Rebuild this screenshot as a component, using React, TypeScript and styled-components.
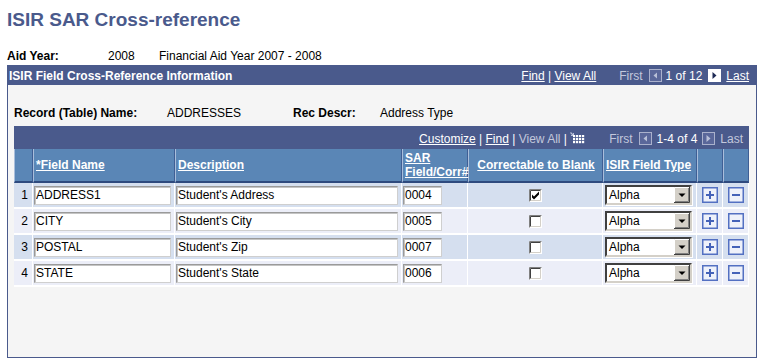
import React from "react";
import styled, { createGlobalStyle } from "styled-components";

const GlobalStyle = createGlobalStyle`
  body {
    margin: 0;
    background: #ffffff;
    font-family: Arial, "Liberation Sans", sans-serif;
    font-size: 12px;
    color: #000000;
  }
`;

const Page = styled.div`
  padding: 9px 0 0 7px;
`;

const Title = styled.h1`
  margin: 0;
  height: 22px;
  font-size: 19px;
  line-height: 22px;
  font-weight: bold;
  color: #4a5a8c;
`;

const InfoRow = styled.div`
  display: flex;
  height: 16px;
  line-height: 16px;
  margin-top: ${(p: { $top: number }) => p.$top}px;
`;

const Label = styled.span<{ $w: number }>`
  width: ${(p) => p.$w}px;
  font-weight: bold;
`;

const Value = styled.span<{ $w?: number }>`
  width: ${(p) => (p.$w ? `${p.$w}px` : "auto")};
`;

const Panel = styled.div`
  width: 748px;
  margin-top: 1px;
  border: 1px solid #4a5a8c;
  background: #f5f5f5;
`;

const PanelBar = styled.div`
  height: 19px;
  background: #4a5a8c;
  color: #ffffff;
  display: flex;
  align-items: center;
  justify-content: space-between;
  padding: 0 7px 0 1px;
`;

const BarTitle = styled.span`
  font-weight: bold;
`;

const Nav = styled.div`
  display: flex;
  align-items: center;
  color: #ffffff;
  white-space: pre;
`;

const NavLink = styled.span<{ $off?: boolean }>`
  color: ${(p) => (p.$off ? "#c3c8dc" : "#ffffff")};
  text-decoration: ${(p) => (p.$off ? "none" : "underline")};
`;

const Gap = styled.span<{ $w: number }>`
  display: inline-block;
  width: ${(p) => p.$w}px;
`;

const PanelBody = styled.div`
  padding: 0 7px 70px 6px;
`;

const GridNav = styled.div`
  width: 729px;
  height: 21px;
  margin-top: 5px;
  background: #4a5a8c;
  display: flex;
  justify-content: flex-end;
  align-items: center;
  padding: 2px 6px 0 0;
  box-sizing: content-box;
`;

const Grid = styled.table`
  width: 735px;
  border-collapse: separate;
  border-spacing: 0;
  table-layout: fixed;
`;

const HeadRow = styled.tr`
  height: 34px;
`;

const Th = styled.th<{ $center?: boolean }>`
  background: #5a86b6;
  color: #ffffff;
  font-weight: bold;
  font-size: 12px;
  line-height: 14px;
  text-align: ${(p) => (p.$center ? "center" : "left")};
  vertical-align: middle;
  padding: 0 1px 0 2px;
  border-left: 1px solid #a9bedb;
  border-right: 1px solid #3f5f95;
  border-bottom: 2px solid #2e4a7e;
  white-space: nowrap;

  & > span {
    text-decoration: underline;
  }
`;

const Row = styled.tr<{ $odd: boolean }>`
  height: 26px;
  background: ${(p) => (p.$odd ? "#d5dfef" : "#eceef8")};
`;

const Td = styled.td<{ $align?: string }>`
  padding: 0 1px;
  text-align: ${(p) => p.$align || "left"};
  vertical-align: middle;
  border-right: 1px solid #ffffff;
  border-bottom: 2px solid #ffffff;
`;

const RowNum = styled(Td)`
  padding-right: 4px;
`;

const TextBox = styled.input<{ $w: number }>`
  width: ${(p) => p.$w}px;
  height: 19px;
  box-sizing: border-box;
  margin: 0;
  padding: 0 1px;
  font-family: Arial, "Liberation Sans", sans-serif;
  font-size: 12px;
  color: #000000;
  background: #ffffff;
  border: 1px solid;
  border-color: #9a9a9a #cfcfcf #cfcfcf #9a9a9a;
  box-shadow: inset 1px 1px 0 #c4c4c4;
  outline: none;
  display: block;
`;

const Select = styled.div`
  width: 87px;
  height: 20px;
  box-sizing: border-box;
  margin-left: 1px;
  display: flex;
  align-items: center;
  justify-content: space-between;
  background: #ffffff;
  border: 2px solid;
  border-color: #404040 #d4d0c8 #d4d0c8 #404040;
  box-shadow: 1px 1px 0 #ffffff;
  padding-left: 2px;
`;

const Center = styled.div`
  display: flex;
  justify-content: center;
  align-items: center;
`;

const PrevIcon = ({ on }: { on?: boolean }) => (
  <svg width="13" height="13" viewBox="0 0 13 13">
    <rect x="0.5" y="0.5" width="12" height="12" fill={on ? "#ffffff" : "#5a679a"} stroke={on ? "#ffffff" : "#aab1cc"} />
    <path d="M8 3.5 L4.5 6.5 L8 9.5 Z" fill={on ? "#1e2a55" : "#b9c0d8"} />
  </svg>
);

const NextIcon = ({ on }: { on?: boolean }) => (
  <svg width="13" height="13" viewBox="0 0 13 13">
    <rect x="0.5" y="0.5" width="12" height="12" fill={on ? "#ffffff" : "#5a679a"} stroke={on ? "#ffffff" : "#aab1cc"} />
    <path d="M4.5 3 L8.5 6.5 L4.5 10 Z" fill={on ? "#1e2a55" : "#b9c0d8"} />
  </svg>
);

const GridIcon = () => (
  <svg width="15" height="14" viewBox="0 0 15 14" style={{ alignSelf: "flex-start", marginTop: 0 }}>
    <path d="M0.5 0.5 L3.5 3.5" stroke="#b9c0d8" strokeWidth="1.2" fill="none" />
    <path d="M1 3.5 H3.5 V1" stroke="#b9c0d8" strokeWidth="1" fill="none" />
    {[0, 1, 2].map((r) =>
      [0, 1, 2, 3].map((c) => (
        <rect key={`${r}-${c}`} x={3 + c * 3} y={3 + r * 3} width="2.2" height="2.2" fill="#ffffff" />
      ))
    )}
  </svg>
);

const CheckBox = ({ checked }: { checked?: boolean }) => (
  <svg width="13" height="13" viewBox="0 0 13 13">
    <rect x="0" y="0" width="13" height="13" fill="#ffffff" />
    <path d="M0.5 12.5 V0.5 H12.5" stroke="#808080" fill="none" />
    <path d="M1.5 11.5 V1.5 H11.5" stroke="#404040" fill="none" />
    <path d="M1 12.5 H12.5 V1" stroke="#ffffff" fill="none" />
    <path d="M2 11.5 H11.5 V2" stroke="#d4d0c8" fill="none" />
    {checked && <path d="M3 5.5 L5 7.5 L10 2.5 L10 5.5 L5 10.5 L3 8.5 Z" fill="#000000" />}
  </svg>
);

const DropArrow = () => (
  <svg width="16" height="16" viewBox="0 0 16 16">
    <rect x="0" y="0" width="16" height="16" fill="#d4d0c8" />
    <path d="M0.5 15 V0.5 H15" stroke="#ffffff" fill="none" />
    <path d="M0 15.5 H15.5 V0" stroke="#404040" fill="none" />
    <path d="M1 14.5 H14.5 V1" stroke="#808080" fill="none" />
    <path d="M4.5 6.5 H11.5 L8 10 Z" fill="#000000" />
  </svg>
);

const RowButton = ({ minus }: { minus?: boolean }) => (
  <svg width="16" height="16" viewBox="0 0 16 16">
    <rect x="0.75" y="0.75" width="14.5" height="14.5" fill="#eef1fa" stroke="#5370c2" strokeWidth="1.5" />
    <rect x="4" y="7" width="8" height="2" fill="#4462b8" />
    {!minus && <rect x="7" y="4" width="2" height="8" fill="#4462b8" />}
  </svg>
);

const rows = [
  { name: "ADDRESS1", desc: "Student's Address", sar: "0004", checked: true },
  { name: "CITY", desc: "Student's City", sar: "0005", checked: false },
  { name: "POSTAL", desc: "Student's Zip", sar: "0007", checked: false },
  { name: "STATE", desc: "Student's State", sar: "0006", checked: false },
];

const widths = [19, 142, 227, 66, 135, 94, 26, 26];

export default function App() {
  return (
    <Page>
      <GlobalStyle />
      <Title>ISIR SAR Cross-reference</Title>
      <InfoRow $top={17}>
        <Label $w={101}>Aid Year:</Label>
        <Value $w={51}>2008</Value>
        <Value>Financial Aid Year 2007 - 2008</Value>
      </InfoRow>
      <Panel>
        <PanelBar>
          <BarTitle>ISIR Field Cross-Reference Information</BarTitle>
          <Nav>
            <NavLink>Find</NavLink> | <NavLink>View All</NavLink>
            <Gap $w={23} />
            <NavLink $off>First</NavLink>
            <Gap $w={6} />
            <PrevIcon />
            <Gap $w={4} />
            <span>1 of 12</span>
            <Gap $w={6} />
            <NextIcon on />
            <Gap $w={5} />
            <NavLink>Last</NavLink>
          </Nav>
        </PanelBar>
        <PanelBody>
          <InfoRow $top={20}>
            <Label $w={153}>Record (Table) Name:</Label>
            <Value $w={126}>ADDRESSES</Value>
            <Label $w={87}>Rec Descr:</Label>
            <Value>Address Type</Value>
          </InfoRow>
          <GridNav>
            <Nav>
              <NavLink>Customize</NavLink> | <NavLink>Find</NavLink> | <NavLink $off>View All</NavLink> |{" "}
              <GridIcon />
              <Gap $w={24} />
              <NavLink $off>First</NavLink>
              <Gap $w={6} />
              <PrevIcon />
              <Gap $w={5} />
              <span>1-4 of 4</span>
              <Gap $w={5} />
              <NextIcon />
              <Gap $w={5} />
              <NavLink $off>Last</NavLink>
            </Nav>
          </GridNav>
          <Grid>
            <colgroup>
              {widths.map((w, i) => (
                <col key={i} style={{ width: w }} />
              ))}
            </colgroup>
            <thead>
              <HeadRow>
                <Th />
                <Th>
                  <span>*Field Name</span>
                </Th>
                <Th>
                  <span>Description</span>
                </Th>
                <Th>
                  <span>SAR</span>
                  <br />
                  <span>Field/Corr#</span>
                </Th>
                <Th $center>
                  <span>Correctable to Blank</span>
                </Th>
                <Th>
                  <span>ISIR Field Type</span>
                </Th>
                <Th />
                <Th />
              </HeadRow>
            </thead>
            <tbody>
              {rows.map((r, i) => (
                <Row key={r.name} $odd={i % 2 === 0}>
                  <RowNum $align="right">{i + 1}</RowNum>
                  <Td>
                    <TextBox $w={137} value={r.name} readOnly />
                  </Td>
                  <Td>
                    <TextBox $w={222} value={r.desc} readOnly />
                  </Td>
                  <Td>
                    <TextBox $w={39} value={r.sar} readOnly />
                  </Td>
                  <Td>
                    <Center>
                      <CheckBox checked={r.checked} />
                    </Center>
                  </Td>
                  <Td>
                    <Select>
                      <span>Alpha</span>
                      <DropArrow />
                    </Select>
                  </Td>
                  <Td>
                    <Center>
                      <RowButton />
                    </Center>
                  </Td>
                  <Td>
                    <Center>
                      <RowButton minus />
                    </Center>
                  </Td>
                </Row>
              ))}
            </tbody>
          </Grid>
        </PanelBody>
      </Panel>
    </Page>
  );
}
